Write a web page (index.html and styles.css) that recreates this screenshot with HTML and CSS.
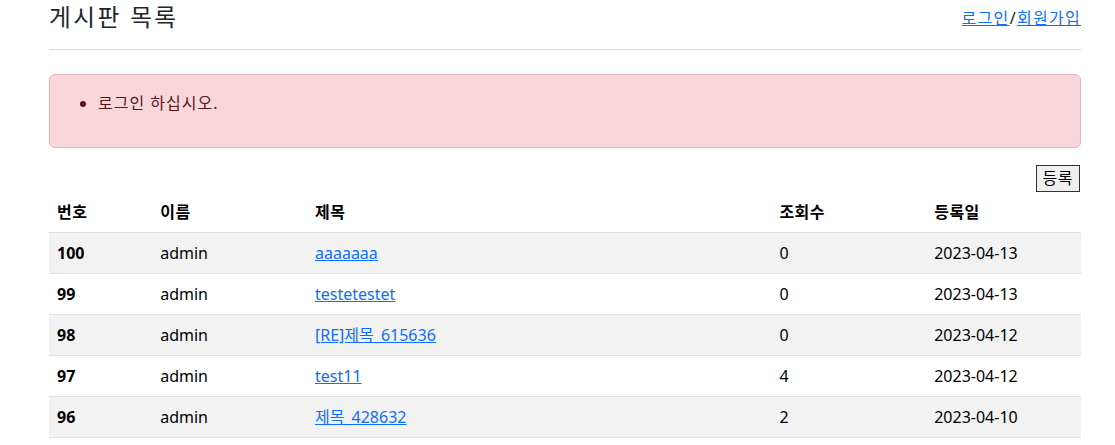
FILE: index.html
```html
<!DOCTYPE html>
<html lang="ko">
<head>
<meta charset="utf-8">
<title>게시판 목록</title>
<link rel="stylesheet" href="styles.css">
</head>
<body>
<div class="container">
  <header class="page-head">
    <h4 class="title">게시판 목록</h4>
    <div class="auth"><a href="#">로그인</a>/<a href="#">회원가입</a></div>
  </header>
  <hr class="rule">
  <div class="alert">
    <ul class="alert-list">
      <li>로그인 하십시오.</li>
    </ul>
  </div>
  <div class="toolbar">
    <button type="button" class="btn">등록</button>
  </div>
  <table class="board">
    <colgroup>
      <col class="c-no"><col class="c-name"><col class="c-title"><col class="c-views"><col class="c-date">
    </colgroup>
    <thead>
      <tr><th>번호</th><th>이름</th><th>제목</th><th>조회수</th><th>등록일</th></tr>
    </thead>
    <tbody>
      <tr class="odd"><th>100</th><td>admin</td><td><a href="#">aaaaaaa</a></td><td>0</td><td>2023-04-13</td></tr>
      <tr><th>99</th><td>admin</td><td><a href="#">testetestet</a></td><td>0</td><td>2023-04-13</td></tr>
      <tr class="odd"><th>98</th><td>admin</td><td><a href="#">[RE]제목_615636</a></td><td>0</td><td>2023-04-12</td></tr>
      <tr><th>97</th><td>admin</td><td><a href="#">test11</a></td><td>4</td><td>2023-04-12</td></tr>
      <tr class="odd"><th>96</th><td>admin</td><td><a href="#">제목_428632</a></td><td>2</td><td>2023-04-10</td></tr>
    </tbody>
  </table>
</div>
</body>
</html>
```
FILE: styles.css
```css
* { box-sizing: border-box; }
html, body { margin: 0; padding: 0; background: #fff; }
body {
  font-family: "Noto Sans", "Noto Sans CJK KR", sans-serif;
  font-size: 16px;
  line-height: 1.5;
  color: #212529;
}
a { color: #0d6efd; text-decoration: underline; }
.container {
  width: 1032px;
  margin-left: 49px;
}
.page-head {
  display: flex;
  justify-content: space-between;
  align-items: flex-start;
  padding-top: 3px;
}
.title {
  margin: 0;
  font-size: 23.7px;
  font-weight: 400;
  line-height: 1.2;
  letter-spacing: 2.4px;
  color: #212529;
}
.auth {
  font-size: 16px;
  line-height: 24px;
  padding-top: 3px;
  letter-spacing: 1.3px;
  margin-right: 0;
}
.rule {
  margin: 18px 0 24px;
  border: 0;
  border-top: 1px solid #dedede;
  height: 0;
}
.alert {
  background: #f8d7da;
  border: 1px solid #f1aeb5;
  border-radius: 6px;
  color: #58151c;
  padding: 16px;
  margin-bottom: 17px;
}
.alert-list {
  margin: 0 0 16px;
  padding-left: 32px;
  letter-spacing: 1px;
}
.toolbar {
  display: flex;
  justify-content: flex-end;
}
.btn {
  font-family: "Noto Sans", "Noto Sans CJK KR", sans-serif;
  font-size: 16px;
  line-height: 23px;
  height: 27px;
  padding: 1px 6px;
  margin-right: 1px;
  background: #efefef;
  border: 1px solid #333;
  border-radius: 0;
  color: #000;
  letter-spacing: 0.5px;
}
.board {
  width: 100%;
  border-collapse: collapse;
  table-layout: fixed;
  color: #000;
}
.c-no { width: 10%; }
.c-name { width: 15%; }
.c-title { width: 45%; }
.c-views { width: 15%; }
.c-date { width: 15%; }
.board th, .board td {
  padding: 8px;
  text-align: left;
  line-height: 24px;
  border-bottom: 1px solid #dee2e6;
}
.board thead th { font-weight: 700; letter-spacing: 0.5px; }
.board tbody th { font-weight: 700; }
.board td { font-weight: 400; }
.board tr.odd th, .board tr.odd td { background: #f2f2f2; }
```
